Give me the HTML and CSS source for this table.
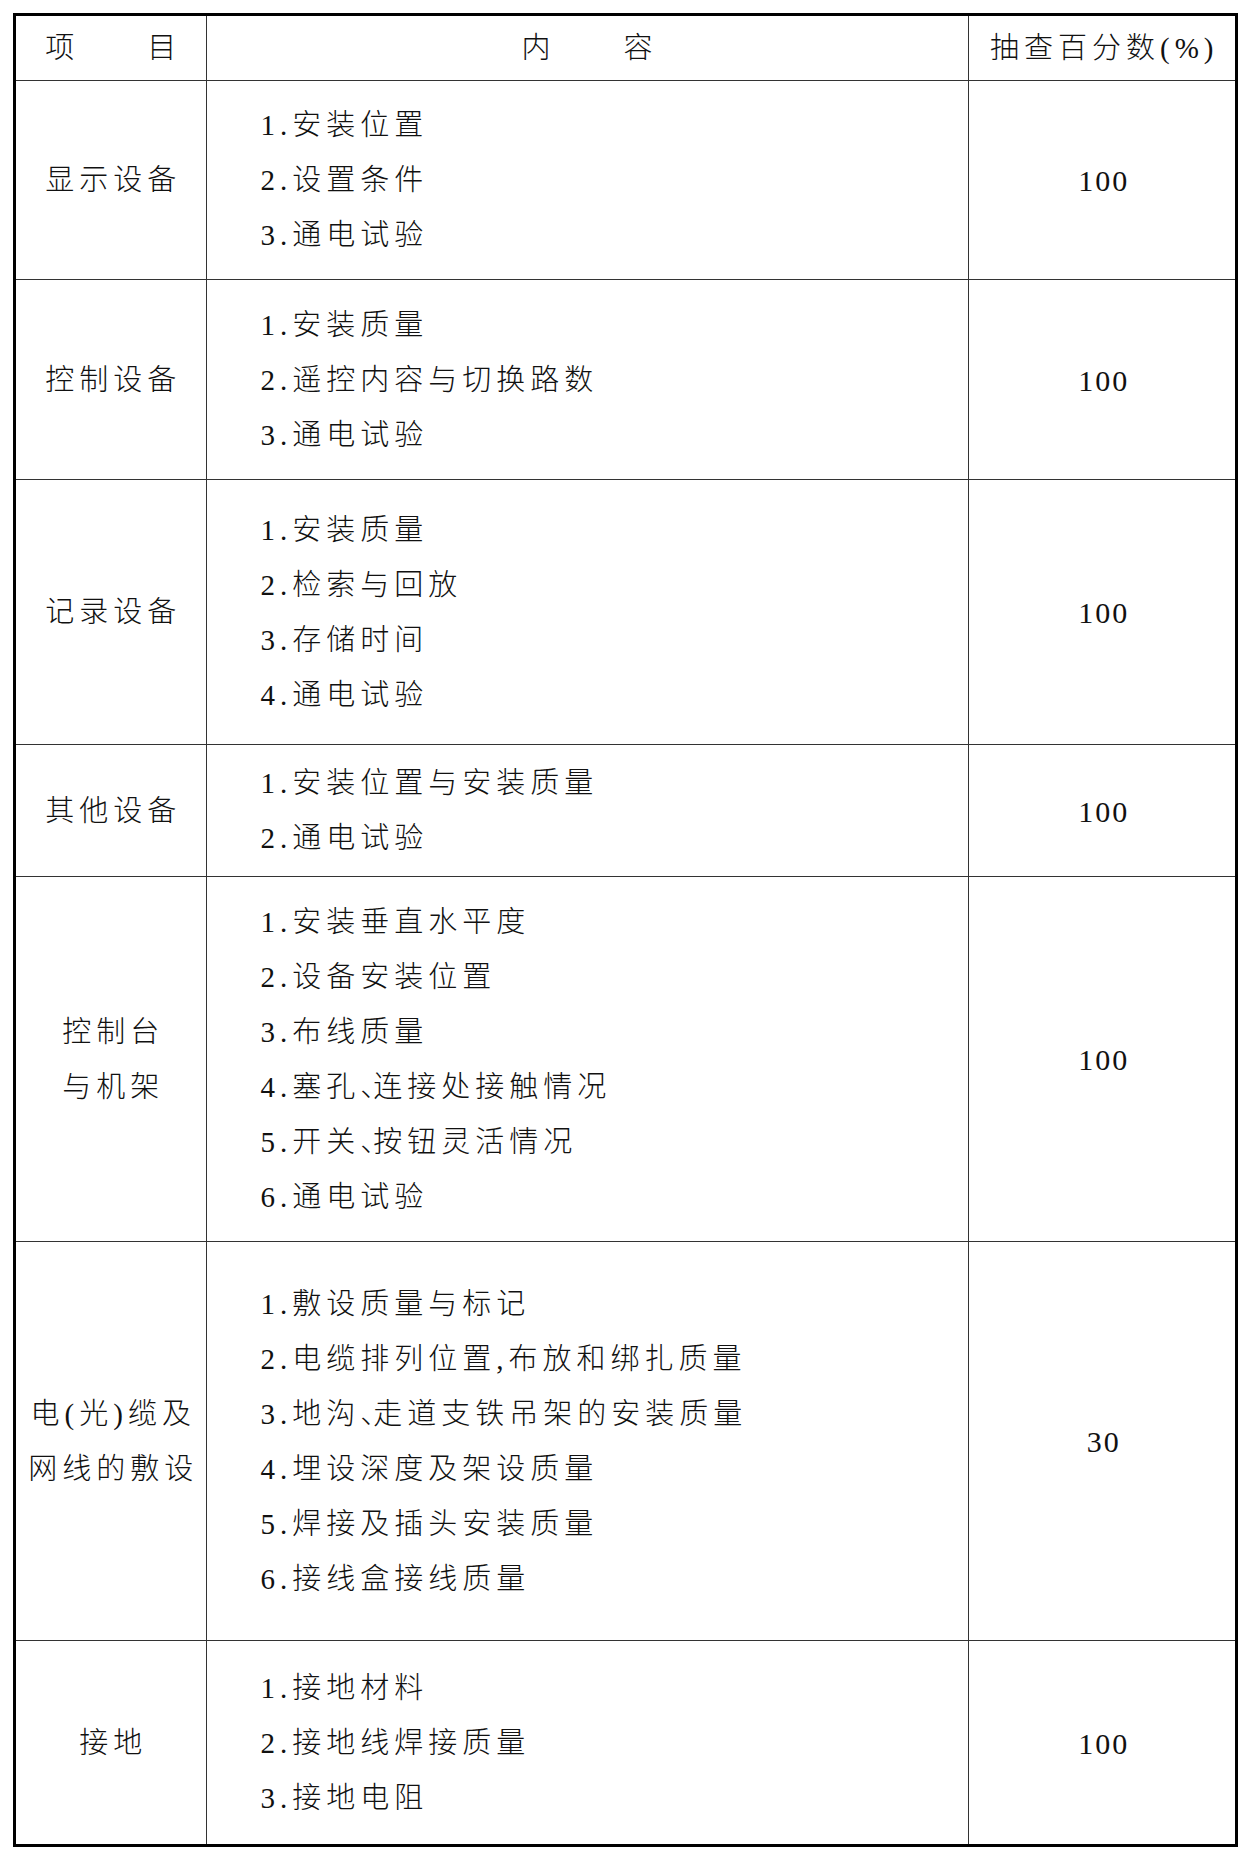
FILE: index.html
```html
<!DOCTYPE html>
<html lang="zh-CN">
<head>
<meta charset="utf-8">
<title>检查项目</title>
<link rel="stylesheet" href="styles.css">
</head>
<body>
<div class="sheet">
<table class="grid">
  <colgroup>
    <col class="c1">
    <col class="c2">
    <col class="c3">
  </colgroup>
  <tr class="r-head">
    <td class="name">项　　目</td>
    <td class="center">内　　容</td>
    <td class="pct">抽查百分数(%)</td>
  </tr>
  <tr class="r1">
    <td class="name">显示设备</td>
    <td class="items"><div>1.安装位置</div><div>2.设置条件</div><div>3.通电试验</div></td>
    <td class="pct num">100</td>
  </tr>
  <tr class="r2">
    <td class="name">控制设备</td>
    <td class="items"><div>1.安装质量</div><div>2.遥控内容与切换路数</div><div>3.通电试验</div></td>
    <td class="pct num">100</td>
  </tr>
  <tr class="r3">
    <td class="name">记录设备</td>
    <td class="items"><div>1.安装质量</div><div>2.检索与回放</div><div>3.存储时间</div><div>4.通电试验</div></td>
    <td class="pct num">100</td>
  </tr>
  <tr class="r4">
    <td class="name">其他设备</td>
    <td class="items"><div>1.安装位置与安装质量</div><div>2.通电试验</div></td>
    <td class="pct num">100</td>
  </tr>
  <tr class="r5">
    <td class="name">控制台<br>与机架</td>
    <td class="items"><div>1.安装垂直水平度</div><div>2.设备安装位置</div><div>3.布线质量</div><div>4.塞孔<span class="punct">、</span>连接处接触情况</div><div>5.开关<span class="punct">、</span>按钮灵活情况</div><div>6.通电试验</div></td>
    <td class="pct num">100</td>
  </tr>
  <tr class="r6">
    <td class="name">电(光)缆及<br>网线的敷设</td>
    <td class="items"><div>1.敷设质量与标记</div><div>2.电缆排列位置,布放和绑扎质量</div><div>3.地沟<span class="punct">、</span>走道支铁吊架的安装质量</div><div>4.埋设深度及架设质量</div><div>5.焊接及插头安装质量</div><div>6.接线盒接线质量</div></td>
    <td class="pct num">30</td>
  </tr>
  <tr class="r7">
    <td class="name">接地</td>
    <td class="items"><div>1.接地材料</div><div>2.接地线焊接质量</div><div>3.接地电阻</div></td>
    <td class="pct num">100</td>
  </tr>
</table>
</div>
</body>
</html>
```

FILE: styles.css
```css
html, body {
  margin: 0;
  padding: 0;
  background: #ffffff;
}

body {
  font-family: "Liberation Serif", "Noto Sans CJK SC", serif;
  font-size: 29px;
  font-weight: 300;
  color: #111;
}

.sheet {
  box-sizing: border-box;
  width: 1225px;
  height: 1834px;
  margin: 13px 0 0 13px;
  border: 3px solid #000;
}

.grid {
  width: 100%;
  border-collapse: collapse;
  table-layout: fixed;
}

.c1 { width: 190px; }
.c2 { width: 762px; }
.c3 { width: 267px; }

.grid td {
  border: 1px solid #333;
  padding: 2px 0 0 0;
  vertical-align: middle;
  line-height: 55px;
  letter-spacing: 5px;
  white-space: nowrap;
}

.grid tr:first-child td { border-top: none; }
.grid tr:last-child td { border-bottom: none; }
.grid td:first-child { border-left: none; }
.grid td:last-child { border-right: none; }

.name {
  text-align: center;
  padding-left: 5px !important;
}

.center {
  text-align: center;
  padding-left: 5px !important;
}

.pct {
  text-align: center;
  padding-left: 5px !important;
}

.grid td.num {
  font-size: 30px;
  letter-spacing: 2px;
  padding-left: 4px !important;
}

.items {
  text-align: left;
  padding-left: 54px !important;
}

.punct {
  letter-spacing: -16px;
}

.r-head { height: 64px; }
.r1 { height: 199px; }
.r2 { height: 200px; }
.r3 { height: 265px; }
.r4 { height: 132px; }
.r5 { height: 365px; }
.r6 { height: 399px; }
.r7 { height: 204px; }
```
